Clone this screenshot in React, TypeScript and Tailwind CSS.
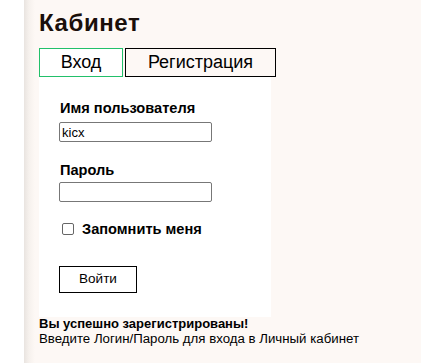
export default function App() {
  return (
    <div className="flex min-h-[363px] w-[421px] bg-white" style={{ fontFamily: '"Liberation Sans", Arial, sans-serif' }}>
      <div className="w-[24px] shrink-0 bg-white" />
      <div className="flex-1 bg-[#fdf8f5] bg-[linear-gradient(to_right,#e9e4e0_0px,#f6f1ed_5px,#fdf8f5_11px)] pl-[15px] text-black">
        <h1 className="mt-[10px] text-[24px] font-bold leading-[26px] tracking-[0.6px] text-[#1a0f0a]">Кабинет</h1>
        <div className="mt-[12px] flex gap-[2px]">
          <div className="flex h-[29px] w-[84px] items-center justify-center border border-[#22c06a] bg-white text-[18px]">Вход</div>
          <div className="flex h-[29px] w-[151px] items-center justify-center border border-black text-[18px]">Регистрация</div>
        </div>
        <div className="flex w-[232px] flex-col bg-white pb-[24px] pl-[20px] pt-[23px]">
          <label className="ml-[1px] text-[14.6px] font-bold leading-[17px]">Имя пользователя</label>
          <input
            defaultValue="kicx"
            className="mt-[5px] h-[20px] w-[153px] rounded-[2px] border border-[#777] bg-white px-[2px] text-[13px] outline-none"
          />
          <label className="ml-[1px] mt-[20px] text-[14.6px] font-bold leading-[17px]">Пароль</label>
          <input className="mt-[3px] h-[20px] w-[153px] rounded-[2px] border border-[#777] bg-white px-[2px] text-[13px] outline-none" />
          <div className="ml-[3px] mt-[19px] flex items-center gap-[8px]">
            <span className="inline-block h-[12px] w-[12px] rounded-[2px] border border-[#666] bg-white" />
            <span className="text-[14.6px] font-bold leading-[16px]">Запомнить меня</span>
          </div>
          <button className="mt-[29px] h-[27px] w-[78px] border border-black bg-white text-[13.5px]">Войти</button>
        </div>
        <div className="text-[13px] font-bold leading-[14px]">Вы успешно зарегистрированы!</div>
        <div className="text-[13.25px] leading-[15px]">Введите Логин/Пароль для входа в Личный кабинет</div>
      </div>
    </div>
  );
}
